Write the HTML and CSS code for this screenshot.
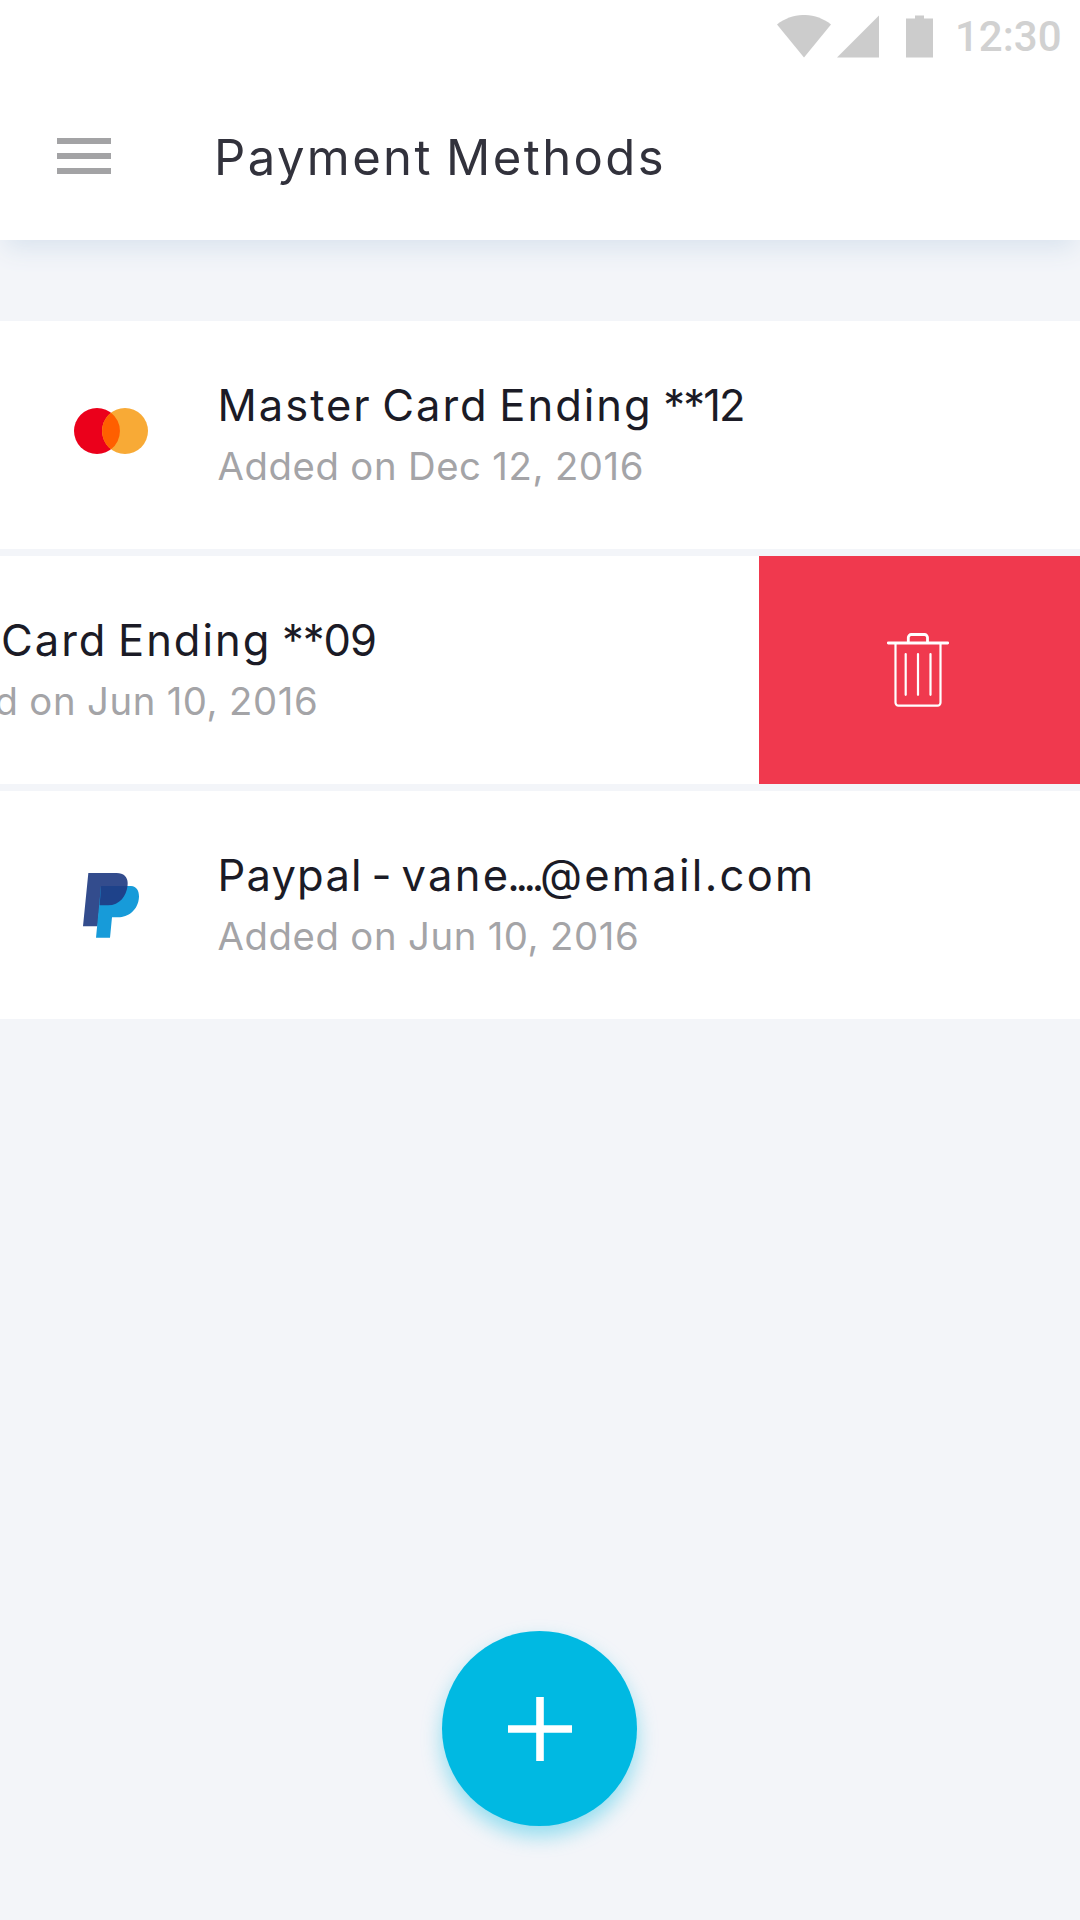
FILE: index.html
```html
<!DOCTYPE html>
<html lang="en">
<head>
<meta charset="utf-8">
<title>Payment Methods</title>
<link rel="stylesheet" href="styles.css">
</head>
<body>
<div class="screen">
  <header class="header">
    <div class="status-bar">
      <svg class="wifi" width="54" height="43" viewBox="0 0 54 43"><path d="M0 9.5C16-3.2 38-3.2 54 9.5L27 42.5Z"/></svg>
      <svg class="signal" width="42" height="43" viewBox="0 0 42 43"><path d="M42 .5V42.5H0Z"/></svg>
      <svg class="battery" width="27" height="43" viewBox="0 0 27 43"><path d="M9 .5h9v3h9v39H0v-39h9Z"/></svg>
      <span class="clock">12:30</span>
    </div>
    <div class="app-bar">
      <button class="menu" aria-label="Menu"><i></i><i></i><i></i></button>
      <h1 class="title">Payment Methods</h1>
    </div>
  </header>

  <main class="content">
    <ul class="methods">
      <li class="method">
        <div class="method-body">
          <div class="logo">
            <svg class="mastercard" width="74" height="46" viewBox="0 0 74 46">
              <circle cx="23" cy="23" r="23" fill="#eb001b"/>
              <circle cx="51" cy="23" r="23" fill="#f8aa36"/>
              <path d="M37 4.8a23 23 0 0 1 0 36.4a23 23 0 0 1 0-36.4Z" fill="#ff5f00"/>
            </svg>
          </div>
          <div class="details">
            <p class="name">Master Card Ending <span class="digits">**12</span></p>
            <p class="date">Added on Dec 12, 2016</p>
          </div>
        </div>
      </li>
      <li class="method swiped">
        <div class="method-body">
          <div class="logo"></div>
          <div class="details">
            <p class="name visa">Visa Card Ending <span class="digits wide">**09</span></p>
            <p class="date">Added on Jun 10, 2016</p>
          </div>
        </div>
        <button class="delete" aria-label="Delete">
          <svg width="64" height="76" viewBox="0 0 64 76" fill="none" stroke="#fff" stroke-linecap="round">
            <path d="M2.3 11H61.7M22.3 10.500V5.500A3 3 0 0 1 25.300 2.500H38.500A3 3 0 0 1 41.500 5.500V10.500" stroke-width="2.800"/>
            <path d="M9.500 12V70.500A3 3 0 0 0 12.500 73.600H51.500A3 3 0 0 0 54.500 70.500V12M19.700 22V62.800M32 22V62.800M44.500 22V62.800" stroke-width="2.200"/>
          </svg>
        </button>
      </li>
      <li class="method">
        <div class="method-body">
          <div class="logo">
            <svg class="paypal" width="70" height="80" viewBox="0 0 210 240">
              <path d="M37 27H122C143 27 155 39 155 57C155 92 133 124 96 124H71L65 187H21Z" fill="#334c8d"/>
              <path d="M75 66H165C182 67 189 80 189 98C187 140 155 159 127 160H108L102 221H60Z" fill="#179bd9"/>
              <path d="M75 66H154.500C151 96 131 124 96 124H71Z" fill="#1e428a"/>
            </svg>
          </div>
          <div class="details">
            <p class="name email">Paypal - <span class="address">vane<span class="dots">....</span>@email.com</span></p>
            <p class="date">Added on Jun 10, 2016</p>
          </div>
        </div>
      </li>
    </ul>
    <button class="add" aria-label="Add payment method">
      <svg width="64" height="64" viewBox="0 0 64 64"><path d="M28.200 0h7.600v28.200H64v7.600H35.800V64h-7.600V35.800H0v-7.600h28.200Z" fill="#fff"/></svg>
    </button>
  </main>
</div>
</body>
</html>
```
FILE: styles.css
```css
* { box-sizing: border-box; margin: 0; padding: 0; }

body {
  background: #f3f5f9;
  font-family: Inter, "Liberation Sans", sans-serif;
}

button { border: 0; background: none; font: inherit; }
svg { display: block; flex: none; }

.screen {
  display: flex;
  flex-direction: column;
  width: 1080px;
  height: 1920px;
  overflow: hidden;
}

/* Header */
.header {
  flex: none;
  height: 240px;
  background: #fff;
  box-shadow: 0 13px 24px -5px #d9e3ee;
}

.status-bar {
  display: flex;
  align-items: flex-start;
  height: 72px;
  padding: 14.5px 0 0 777px;
  fill: #ccc;
}

.signal { margin-left: 6px; }
.battery { margin-left: 27px; }

.clock {
  margin: -2.5px 0 0 22px;
  font: 500 42px/49px Roboto, sans-serif;
  color: #d1d1d1;
}

.app-bar {
  display: flex;
  align-items: center;
  gap: 103px;
  height: 168px;
  padding-left: 57px;
}

.menu {
  display: flex;
  flex-direction: column;
  gap: 9px;
  width: 54px;
}

.menu i { height: 6px; background: #a3a3a5; }

.title {
  padding-top: 4px;
  font-size: 49px;
  font-weight: 400;
  line-height: 60px;
  letter-spacing: 2.4px;
  word-spacing: -3px;
  color: #32323c;
  white-space: nowrap;
}

/* Payment method list */
.content {
  display: flex;
  flex: 1;
  flex-direction: column;
  align-items: center;
  padding: 81px 0 94px;
}

.methods {
  display: flex;
  flex-direction: column;
  gap: 7px;
  width: 100%;
  list-style: none;
}

.method {
  display: flex;
  height: 228px;
  overflow: hidden;
  background: #fff;
}

.method-body { display: flex; flex: none; width: 1080px; }
.swiped .method-body { margin-left: -321px; }

.logo {
  display: flex;
  justify-content: center;
  align-items: flex-start;
  width: 217.5px;
  padding-left: 4.5px;
}

.mastercard { margin-top: 87px; }
.paypal { margin-top: 73px; }

.details {
  display: flex;
  flex-direction: column;
  gap: 6px;
  padding-top: 54px;
  white-space: nowrap;
}

.name {
  font-size: 43.5px;
  line-height: 60px;
  letter-spacing: 2px;
  word-spacing: -3.7px;
  color: #1b1b26;
}

.visa { margin-left: -2px; }
.digits { letter-spacing: -1.8px; }
.digits.wide { letter-spacing: -1px; }
.email { letter-spacing: 1.2px; word-spacing: -4.7px; }
.address { letter-spacing: 2.3px; }
.dots { margin-left: -3px; letter-spacing: -4.4px; }

.date {
  font-size: 38.3px;
  line-height: 50px;
  letter-spacing: .6px;
  word-spacing: -.6px;
  color: #a4a4a7;
}

.delete {
  flex: none;
  width: 321px;
  padding: 76px 0 76px 127px;
  background: #f0394e;
}

/* Floating action button */
.add {
  display: flex;
  align-items: center;
  justify-content: center;
  width: 195px;
  height: 195px;
  margin: auto 1px 0 0;
  padding-left: 1px;
  border-radius: 50%;
  background: #00b9e2;
  box-shadow: 0 10px 20px rgba(0, 185, 226, .4);
}
```
